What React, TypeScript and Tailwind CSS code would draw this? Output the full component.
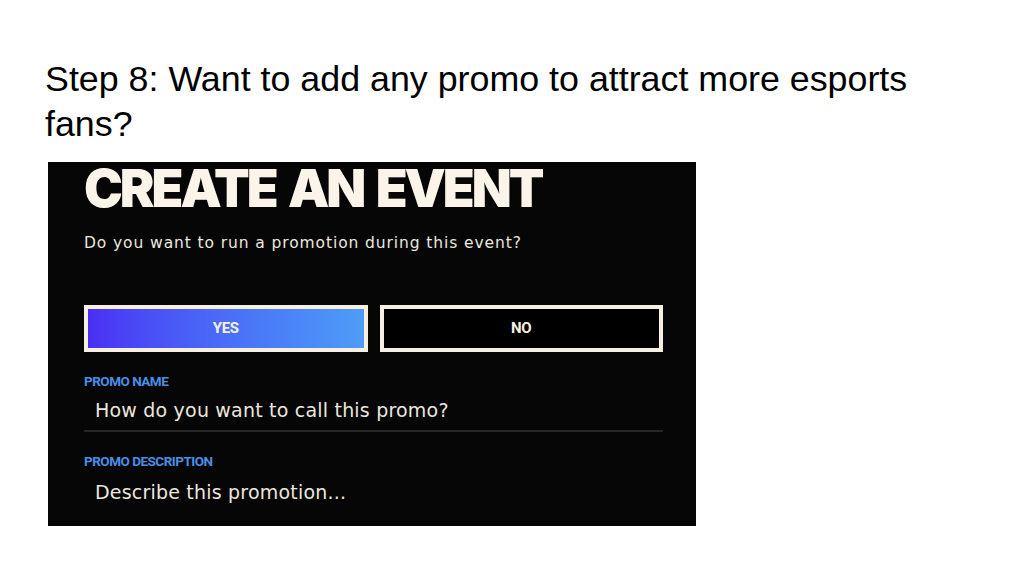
export default function App() {
  return (
    <div className="w-[1024px] h-[576px] bg-white overflow-hidden font-['Liberation_Sans',Arial,sans-serif]">
      <div className="pl-[45px] pt-[57px] text-[35.8px] leading-[45px] text-black font-['Liberation_Sans',Arial,sans-serif]">
        Step 8: Want to add any promo to attract more esports<br />fans?
      </div>
      <div className="ml-[48px] mt-[15px] w-[648px] h-[364px] bg-[#060606] pl-[36px] pr-[33px]">
        <div className="pt-[1px] text-[52px] leading-[52px] font-black tracking-[-3px] [word-spacing:5px] text-[#fbf5e9] font-['Inter',sans-serif]">
          CREATE AN EVENT
        </div>
        <div className="mt-[18px] text-[15.5px] leading-[20px] tracking-[0.9px] text-[#ece7de] font-['DejaVu_Sans',sans-serif]">
          Do you want to run a promotion during this event?
        </div>
        <div className="mt-[52px] flex gap-[12px] font-['Roboto',sans-serif]">
          <div className="flex-1 h-[47px] border-[4px] border-[#f7f0e2] bg-gradient-to-r from-[#4a2ef4] to-[#4e9cf7] flex items-center justify-center text-[15px] font-bold tracking-[-0.3px] text-[#f7f0e2]">
            YES
          </div>
          <div className="flex-1 h-[47px] border-[4px] border-[#f7f0e2] bg-black flex items-center justify-center text-[15px] font-bold tracking-[-0.3px] text-[#f7f0e2]">
            NO
          </div>
        </div>
        <div className="mt-[21px] text-[13.5px] leading-[16px] font-bold tracking-[-0.5px] text-[#4a8fe6] font-['Roboto',sans-serif]">
          PROMO NAME
        </div>
        <div className="mt-[9px] pl-[11px] pb-[8px] border-b-[2px] border-[#262626] text-[19px] leading-[24px] tracking-[0.2px] text-[#ece7de] font-['DejaVu_Sans',sans-serif]">
          How do you want to call this promo?
        </div>
        <div className="mt-[21px] text-[13.5px] leading-[16px] font-bold tracking-[-0.5px] text-[#4a8fe6] font-['Roboto',sans-serif]">
          PROMO DESCRIPTION
        </div>
        <div className="mt-[11px] pl-[11px] text-[19px] leading-[24px] tracking-[0.2px] text-[#ece7de] font-['DejaVu_Sans',sans-serif]">
          Describe this promotion...
        </div>
      </div>
    </div>
  );
}
